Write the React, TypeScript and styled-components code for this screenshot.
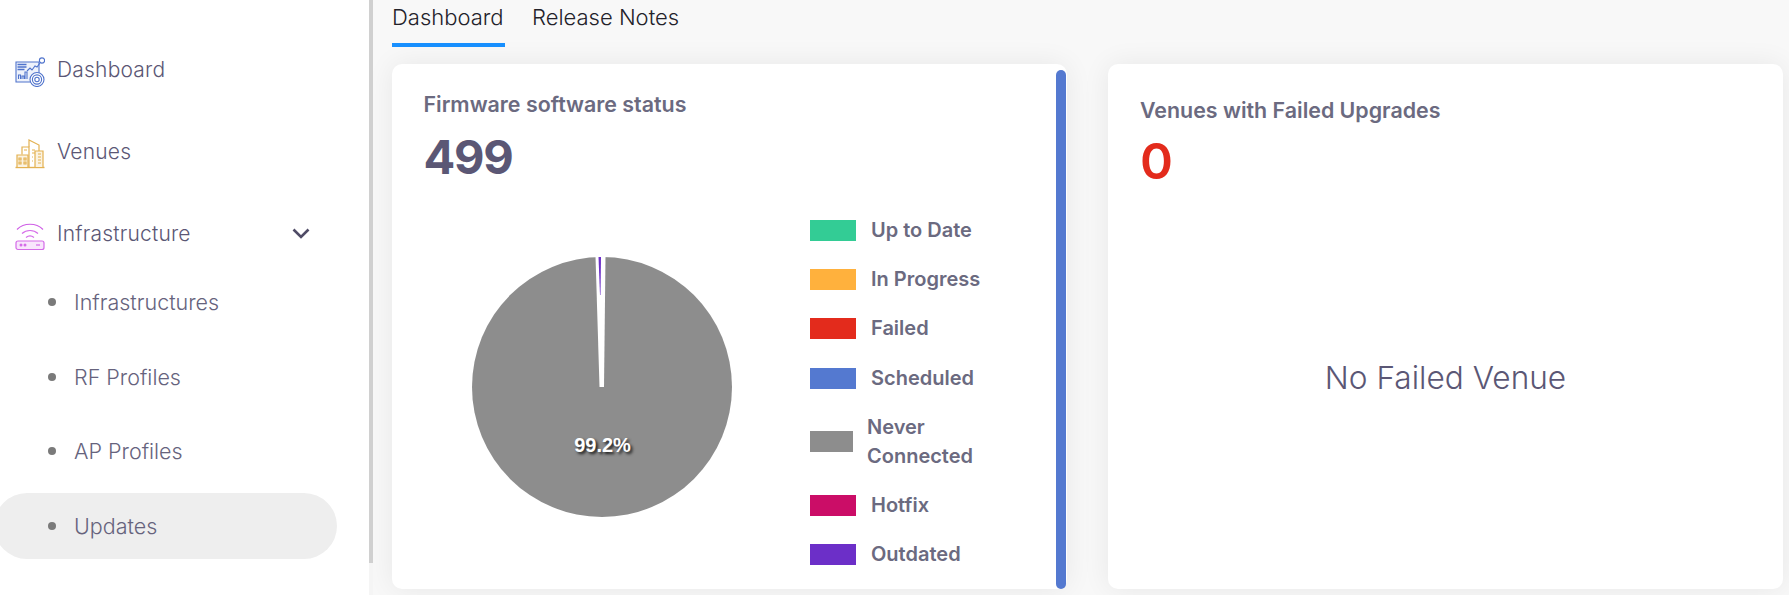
import * as React from 'react'
import styled, { createGlobalStyle } from 'styled-components'

const Global = createGlobalStyle`
  html, body {
    margin: 0;
    padding: 0;
    height: 100%;
    overflow: hidden;
    background: #f8f8f8;
  }
`

const Page = styled.div`
  display: flex;
  width: 1789px;
  height: 595px;
  overflow: hidden;
  font-family: Inter, "Open Sans", sans-serif;
  color: #5b5775;
`

const Sidebar = styled.aside`
  position: relative;
  z-index: 1;
  display: flex;
  flex: 0 0 373px;
  height: 595px;
  background: #fff;
`

const Nav = styled.nav`
  flex: 1;
  padding-top: 44px;
  overflow: hidden;
`

const ScrollTrack = styled.div`
  flex: 0 0 4px;
  background: #f5f5f5;
`

const ScrollThumb = styled.div`
  height: 563px;
  background: #d0d0d0;
`

const NavItem = styled.div`
  display: flex;
  align-items: center;
  height: 50px;
  margin-bottom: 32px;
  padding-left: 15px;
  font-size: 21px;
  font-weight: 300;
  letter-spacing: 0.2px;
`

const NavIcon = styled.svg`
  flex: 0 0 30px;
  width: 30px;
  height: 30px;
  margin-top: 5px;
  margin-right: 12px;
`

const Chevron = styled.svg`
  width: 18px;
  height: 11px;
  margin-left: auto;
  margin-right: 59px;
`

const SubList = styled.div`
  display: flex;
  flex-direction: column;
  gap: 8.5px;
  margin-top: -20.5px;
`

const SubItem = styled.div<{ $active?: boolean }>`
  display: flex;
  align-items: center;
  height: 66px;
  margin-left: -6px;
  width: 343px;
  padding-left: 54px;
  padding-bottom: 1px;
  box-sizing: border-box;
  border-radius: 33px;
  background: ${props => (props.$active ? '#eeeeee' : 'transparent')};
  font-size: 21.5px;
  font-weight: 300;
  color: #66637d;
`

const Dot = styled.span`
  width: 8px;
  height: 8px;
  margin-right: 18px;
  border-radius: 50%;
  background: #7a7a7a;
`

const Main = styled.main`
  flex: 1;
  min-width: 0;
  padding-left: 19px;
`

const Tabs = styled.div`
  display: flex;
  gap: 27px;
  height: 47px;
`

const Tab = styled.div<{ $active?: boolean }>`
  box-sizing: border-box;
  height: 47px;
  width: ${props => (props.$active ? '113px' : 'auto')};
  padding-top: 3px;
  border-bottom: 4px solid ${props => (props.$active ? '#1890ff' : 'transparent')};
  font-size: 22px;
  font-weight: 300;
  line-height: 28px;
  color: #23222a;
`

const Cards = styled.div`
  display: flex;
  gap: 41px;
  margin-top: 17px;
`

const Card = styled.section`
  position: relative;
  flex: 0 0 675px;
  box-sizing: border-box;
  height: 525px;
  border-radius: 10px;
  background: #fff;
  box-shadow: 0 0 28px rgba(0, 0, 0, 0.07);
`

const StatusCard = styled(Card)`
  padding: 25px 0 0 31.5px;
`

const VenuesCard = styled(Card)`
  display: flex;
  flex-direction: column;
  padding: 31px 0 0 32px;
`

const CardScroll = styled.div`
  position: absolute;
  top: 6px;
  right: 1px;
  bottom: 0;
  width: 10px;
  border-radius: 5px;
  background: #5479d0;
`

const CardTitle = styled.h2`
  margin: 0;
  font-size: 21.4px;
  font-weight: 600;
  line-height: 30px;
  color: #6b6a80;
`

const BigNumber = styled.div<{ $color: string; $weight: number; $size: number; $top: number; $spacing: number }>`
  margin-top: ${props => props.$top}px;
  font-size: ${props => props.$size}px;
  font-weight: ${props => props.$weight};
  letter-spacing: ${props => props.$spacing}px;
  line-height: 56px;
  color: ${props => props.$color};
`

const ChartRow = styled.div`
  display: flex;
  margin-top: 64px;
`

const ChartBox = styled.div`
  position: relative;
  flex: 0 0 386.5px;
  height: 272px;
`

const PieSvg = styled.svg`
  display: block;
  margin-left: 47.5px;
  margin-top: 7px;
`

const PieLabel = styled.span`
  position: absolute;
  left: 99px;
  top: 184px;
  width: 160px;
  text-align: center;
  font-family: "Liberation Sans", Arial, sans-serif;
  font-size: 20px;
  font-weight: 700;
  line-height: 24px;
  color: #fff;
  text-shadow: 2px 2px 3px rgba(0, 0, 0, 0.85);
`

const Legend = styled.div`
  display: flex;
  flex-direction: column;
  gap: 20.2px;
  margin-top: -33px;
`

const LegendRow = styled.div`
  display: flex;
  align-items: center;
`

const Swatch = styled.span<{ $color: string; $short?: boolean }>`
  flex: 0 0 ${props => (props.$short ? '43px' : '46px')};
  height: 21px;
  margin-right: ${props => (props.$short ? '14px' : '15px')};
  background: ${props => props.$color};
`

const LegendText = styled.span`
  width: 125px;
  font-size: 20px;
  font-weight: 600;
  line-height: 29px;
  color: #6b6a80;
`

const Empty = styled.div`
  flex: 1;
  display: flex;
  align-items: center;
  justify-content: center;
  padding: 0 32px 24px 0;
  font-size: 31.6px;
  font-weight: 300;
  color: #5b5775;
`

const legend = [
  { label: 'Up to Date', color: '#33cc95' },
  { label: 'In Progress', color: '#ffb13d' },
  { label: 'Failed', color: '#e32b1c' },
  { label: 'Scheduled', color: '#5479d0' },
  { label: 'Never Connected', color: '#8d8d8d', short: true },
  { label: 'Hotfix', color: '#cb0d67' },
  { label: 'Outdated', color: '#6c2fc8' },
]

const subItems = ['Infrastructures', 'RF Profiles', 'AP Profiles', 'Updates']

const DashboardIcon = () => (
  <NavIcon viewBox="0 0 30 30" fill="none" stroke="#4f73cc" strokeWidth="1.1">
    <path d="M1 5h23v20H1z" fill="#eef2fb" />
    <path d="M2.500 7.500h9M2.500 10h9M2.500 12.500h7" strokeWidth="1.3" />
    <path d="M3.500 22v-4h2v4M7 22v-3h2v3M10 22v-7h2v7" />
    <path d="M12 14l3-3 2 2 3-4 2 1 3-4" />
    <circle cx="27" cy="3.500" r="2.600" fill="#fff" />
    <circle cx="22" cy="22.500" r="7" fill="#fff" />
    <circle cx="22" cy="22.500" r="4.600" />
    <circle cx="22" cy="22.500" r="2.200" />
  </NavIcon>
)

const VenuesIcon = () => (
  <NavIcon viewBox="0 0 30 30" fill="none" stroke="#e3b151" strokeWidth="1.2">
    <path d="M0.500 28.500h29" strokeWidth="1.4" />
    <path d="M2 28V16h11v12" fill="#fbf3e2" />
    <path d="M7 15.500V8h7v20" />
    <path d="M14 8V1l10 5v8" />
    <path d="M20 28V12h8v16" fill="#fbf3e2" />
    <path d="M4 19h2v2H4zM9 19h2v2H9zM4 23h2v2H4zM9 23h2v2H9zM23 15h3M23 18h3M23 21h3M23 24h3M17 11h3M17 14h3M17 18h1M17 22h1M9 11h3" />
  </NavIcon>
)

const InfraIcon = () => (
  <NavIcon viewBox="0 0 30 30" fill="none" stroke="#d56be8" strokeWidth="1.2">
    <path d="M2 8.500C9 1.500 21 1.500 28 8.500" stroke="#cf5fe6" />
    <path d="M7 12.500c4.500-4 11.500-4 16 0" />
    <path d="M11 16.500c2.500-2 5.500-2 8 0" />
    <rect x="1" y="20" width="28" height="8.500" rx="2" fill="#f8e6fc" />
    <circle cx="6" cy="24" r="0.900" fill="#d56be8" />
    <circle cx="10" cy="24" r="0.900" fill="#d56be8" />
    <path d="M21 24h4" />
  </NavIcon>
)

export default function App() {
  return (
    <Page>
      <Global />
      <Sidebar>
        <Nav>
          <NavItem>
            <DashboardIcon />
            Dashboard
          </NavItem>
          <NavItem>
            <VenuesIcon />
            Venues
          </NavItem>
          <NavItem>
            <InfraIcon />
            Infrastructure
            <Chevron viewBox="0 0 18 11" fill="none" stroke="#4f4b66" strokeWidth="2.600">
              <path d="M1.500 1.500L9 9l7.500-7.500" />
            </Chevron>
          </NavItem>
          <SubList>
            {subItems.map(item => (
              <SubItem key={item} $active={item === 'Updates'}>
                <Dot />
                {item}
              </SubItem>
            ))}
          </SubList>
        </Nav>
        <ScrollTrack>
          <ScrollThumb />
        </ScrollTrack>
      </Sidebar>
      <Main>
        <Tabs>
          <Tab $active>Dashboard</Tab>
          <Tab>Release Notes</Tab>
        </Tabs>
        <Cards>
          <StatusCard>
            <CardTitle>Firmware software status</CardTitle>
            <BigNumber $color="#5b5775" $weight={700} $size={47} $top={10} $spacing={-1.3}>499</BigNumber>
            <ChartRow>
              <ChartBox>
                <PieSvg width="262" height="262" viewBox="0 0 262 262">
                  <circle cx="131" cy="131" r="130" fill="#8d8d8d" />
                  <path d="M124.500 0h10l-1.500 131h-4.500z" fill="#fff" />
                  <path d="M127.500 1h2.500l-.5 38h-.5z" fill="#6c2fc8" />
                </PieSvg>
                <PieLabel>99.2%</PieLabel>
              </ChartBox>
              <Legend>
                {legend.map(item => (
                  <LegendRow key={item.label}>
                    <Swatch $color={item.color} $short={item.short} />
                    <LegendText>{item.label}</LegendText>
                  </LegendRow>
                ))}
              </Legend>
            </ChartRow>
            <CardScroll />
          </StatusCard>
          <VenuesCard>
            <CardTitle>Venues with Failed Upgrades</CardTitle>
            <BigNumber $color="#e32b1c" $weight={600} $size={50} $top={8} $spacing={0}>0</BigNumber>
            <Empty>No Failed Venue</Empty>
          </VenuesCard>
        </Cards>
      </Main>
    </Page>
  )
}
